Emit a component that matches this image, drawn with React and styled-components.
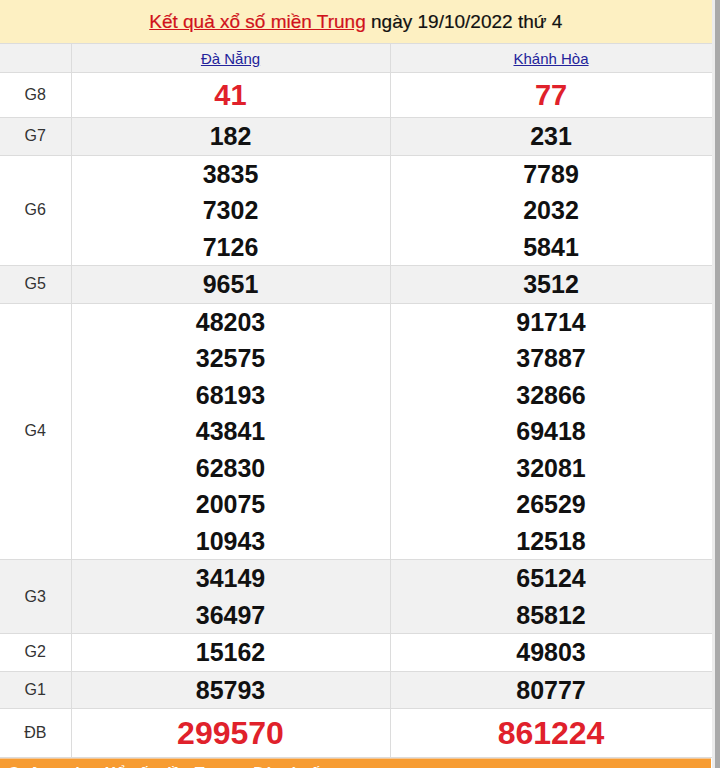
import styled, { createGlobalStyle } from 'styled-components';

const GlobalStyle = createGlobalStyle`
    html, body {
        margin: 0;
        padding: 0;
        background: #ffffff;
        font-family: "Liberation Sans", Arial, sans-serif;
        overflow: hidden;
    }
`;

const Page = styled.div`
    display: flex;
    width: 720px;
    height: 768px;
    overflow: hidden;
`;

const Main = styled.div`
    width: 712px;
    display: flex;
    flex-direction: column;
`;

const Scrollbar = styled.div`
    width: 8px;
    display: flex;
    flex-shrink: 0;
    background: #a9a9a9;
    border-left: 3px solid #ececec;
    box-sizing: border-box;
`;

const Table = styled.table`
    width: 712px;
    border-collapse: collapse;
    table-layout: fixed;
`;

const TitleCell = styled.th`
    height: 43px;
    padding: 0;
    background: #fdf0c2;
    border-right: 1px solid #ddd;
    font-size: 19px;
    font-weight: normal;
    color: #111;
    text-align: center;
    -webkit-text-stroke: 0.2px #111;
`;

const TitleLink = styled.a`
    color: #d0121b;
    text-decoration: underline;
    -webkit-text-stroke: 0.2px #d0121b;
`;

const Tr = styled.tr`
    background: ${(p) => (p.$gray ? '#f1f1f1' : '#ffffff')};
`;

const Label = styled.td`
    width: 71px;
    padding: 0;
    border: 1px solid #dcdcdc;
    border-left: none;
    text-align: center;
    font-size: 16px;
    color: #333;
`;

const Cell = styled.td`
    padding: 0;
    border: 1px solid #dcdcdc;
    text-align: center;
    vertical-align: middle;
`;

const Province = styled.th`
    height: 28px;
    padding: 0;
    border: 1px solid #dcdcdc;
    border-left: ${(p) => (p.$first ? 'none' : '1px solid #dcdcdc')};
    font-size: 15px;
    font-weight: normal;
    text-align: center;
`;

const ProvinceLink = styled.a`
    color: #23239b;
    text-decoration: underline;
`;

const Num = styled.div`
    height: ${(p) => p.$h || 36.5}px;
    line-height: ${(p) => p.$h || 36.5}px;
    font-size: ${(p) => p.$size || 25}px;
    font-weight: bold;
    color: ${(p) => (p.$red ? '#e0212b' : '#111')};
`;

const Footer = styled.div`
    height: 11px;
    background: #f79c32;
    border-top: 1px solid #f3c89a;
    overflow: hidden;
    padding-left: 8px;
    font-size: 16px;
    font-weight: bold;
    color: #fff;
    line-height: 30px;
    width: 703px;
`;

const prizes = [
    { name: 'G8', a: ['41'], b: ['77'], red: true, size: 29, h: 44 },
    { name: 'G7', a: ['182'], b: ['231'] },
    { name: 'G6', a: ['3835', '7302', '7126'], b: ['7789', '2032', '5841'] },
    { name: 'G5', a: ['9651'], b: ['3512'] },
    {
        name: 'G4',
        a: ['48203', '32575', '68193', '43841', '62830', '20075', '10943'],
        b: ['91714', '37887', '32866', '69418', '32081', '26529', '12518'],
    },
    { name: 'G3', a: ['34149', '36497'], b: ['65124', '85812'] },
    { name: 'G2', a: ['15162'], b: ['49803'] },
    { name: 'G1', a: ['85793'], b: ['80777'] },
    { name: 'ĐB', a: ['299570'], b: ['861224'], red: true, size: 32, h: 48 },
];

function Numbers({ list, prize }) {
    return list.map((n) => (
        <Num key={n} $red={prize.red} $size={prize.size} $h={prize.h}>
            {n}
        </Num>
    ));
}

export default function App() {
    return (
        <>
            <GlobalStyle />
            <Page>
                <Main>
                    <Table>
                        <colgroup>
                            <col style={{ width: 71 }} />
                            <col style={{ width: 319 }} />
                            <col style={{ width: 322 }} />
                        </colgroup>
                        <thead>
                            <tr>
                                <TitleCell colSpan={3}>
                                    <TitleLink>Kết quả xổ số miền Trung</TitleLink> ngày 19/10/2022 thứ 4
                                </TitleCell>
                            </tr>
                            <Tr $gray>
                                <Province $first />
                                <Province>
                                    <ProvinceLink>Đà Nẵng</ProvinceLink>
                                </Province>
                                <Province>
                                    <ProvinceLink>Khánh Hòa</ProvinceLink>
                                </Province>
                            </Tr>
                        </thead>
                        <tbody>
                            {prizes.map((p, i) => (
                                <Tr key={p.name} $gray={i % 2 === 1}>
                                    <Label>{p.name}</Label>
                                    <Cell>
                                        <Numbers list={p.a} prize={p} />
                                    </Cell>
                                    <Cell>
                                        <Numbers list={p.b} prize={p} />
                                    </Cell>
                                </Tr>
                            ))}
                        </tbody>
                    </Table>
                    <Footer>Quảng cáo · Xổ số miền Trung · Dò vé số</Footer>
                </Main>
                <Scrollbar />
            </Page>
        </>
    );
}
